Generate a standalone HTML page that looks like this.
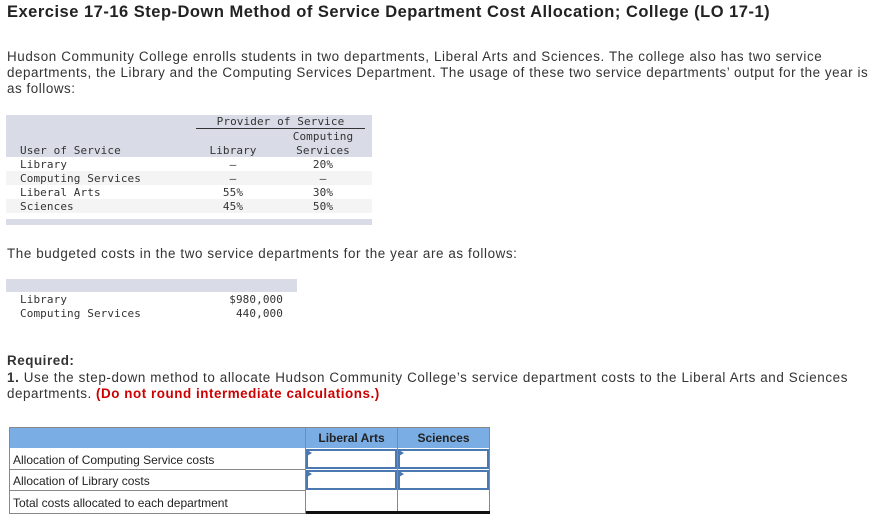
<html><head><style>
body{margin:0;width:891px;height:520px;background:#fff;font-family:"Liberation Sans",sans-serif;color:#222;position:relative;overflow:hidden}
.a{position:absolute}
.m{font-family:"DejaVu Sans Mono","Liberation Mono",monospace;font-size:11px;color:#333;letter-spacing:0.1px}
p{margin:0}
.tc{text-align:center}
.cell{position:absolute;box-sizing:border-box}
.t{font-size:13.4px;letter-spacing:0.55px;white-space:nowrap}
.tri{position:absolute;width:0;height:0;border-top:3px solid transparent;border-bottom:3px solid transparent;border-left:5px solid #4a78b0}
</style></head><body>
<div class="a" style="left:7px;top:3px;font-size:16.5px;font-weight:bold;color:#222;letter-spacing:0.5px;white-space:nowrap">Exercise 17-16 Step-Down Method of Service Department Cost Allocation; College (LO 17-1)</div>
<div class="a t" style="left:7px;top:49px;line-height:16px;color:#333"><span style="letter-spacing:0.62px">Hudson Community College enrolls students in two departments, Liberal Arts and Sciences. The college also has two service</span><br>departments, the Library and the Computing Services Department. The usage of these two service departments’ output for the year is<br>as follows:</div>

<div class="a" style="left:6px;top:115px;width:366px;height:42px;background:#d9dce6"></div>
<div class="a" style="left:6px;top:171px;width:366px;height:14px;background:#f4f4f4"></div>
<div class="a" style="left:6px;top:199px;width:366px;height:14px;background:#f4f4f4"></div>
<div class="a" style="left:6px;top:219px;width:366px;height:6px;background:#d9dce6"></div>
<div class="a" style="left:196px;top:128px;width:169px;height:1px;background:#333"></div>
<div class="a m tc" style="left:196px;top:115px;width:169px">Provider of Service</div>
<div class="a m tc" style="left:283px;top:130px;width:80px;line-height:14px">Computing<br>Services</div>
<div class="a m tc" style="left:198px;top:144px;width:70px">Library</div>
<div class="a m" style="left:20px;top:144px;line-height:14px">User of Service<br>Library<br>Computing Services<br>Liberal Arts<br>Sciences</div>
<div class="a m tc" style="left:198px;top:158px;width:70px;line-height:14px">–<br>–<br>55%<br>45%</div>
<div class="a m tc" style="left:288px;top:158px;width:70px;line-height:14px">20%<br>–<br>30%<br>50%</div>

<div class="a t" style="left:7px;top:246px;color:#333;letter-spacing:0.6px">The budgeted costs in the two service departments for the year are as follows:</div>
<div class="a" style="left:6px;top:279px;width:291px;height:13px;background:#d9dce6"></div>
<div class="a m" style="left:20px;top:293px;line-height:14px">Library<br>Computing Services</div>
<div class="a m" style="left:200px;top:293px;width:83px;line-height:14px;text-align:right">$980,000<br>440,000</div>

<div class="a t" style="left:7px;top:353px;line-height:16.5px;color:#333"><b>Required:</b><br><span style="letter-spacing:0.62px"><b>1.</b> Use the step-down method to allocate Hudson Community College’s service department costs to the Liberal Arts and Sciences</span><br>departments. <b style="color:#c00">(Do not round intermediate calculations.)</b></div>

<div class="cell" style="left:9px;top:427px;width:481px;height:87px;border:1px solid #888"></div>
<div class="cell" style="left:10px;top:428px;width:479px;height:20px;background:#7aade3"></div>
<div class="cell" style="left:10px;top:469px;width:296px;height:1px;background:#888"></div>
<div class="cell" style="left:10px;top:490px;width:296px;height:1px;background:#888"></div>
<div class="cell" style="left:305px;top:428px;width:1px;height:85px;background:#888"></div>
<div class="cell" style="left:397px;top:428px;width:1px;height:85px;background:#888"></div>
<div class="a tc" style="left:306px;top:431px;width:91px;font-size:12px;font-weight:bold;color:#222">Liberal Arts</div>
<div class="a tc" style="left:398px;top:431px;width:91px;font-size:12px;font-weight:bold;color:#222">Sciences</div>
<div class="cell" style="left:306px;top:449px;width:91px;height:20px;border:2px solid #4a78b0"></div>
<div class="cell" style="left:398px;top:449px;width:91px;height:20px;border:2px solid #4a78b0"></div>
<div class="cell" style="left:306px;top:470px;width:91px;height:20px;border:2px solid #4a78b0"></div>
<div class="cell" style="left:398px;top:470px;width:91px;height:20px;border:2px solid #4a78b0"></div>
<div class="tri" style="left:307px;top:450px"></div>
<div class="tri" style="left:399px;top:450px"></div>
<div class="tri" style="left:307px;top:471px"></div>
<div class="tri" style="left:399px;top:471px"></div>
<div class="cell" style="left:306px;top:511px;width:184px;height:3px;background:#111"></div>
<div class="a" style="left:13px;top:453px;font-size:12px;color:#222">Allocation of Computing Service costs</div>
<div class="a" style="left:13px;top:474px;font-size:12px;color:#222">Allocation of Library costs</div>
<div class="a" style="left:13px;top:496px;font-size:12px;color:#222">Total costs allocated to each department</div>
</body></html>
